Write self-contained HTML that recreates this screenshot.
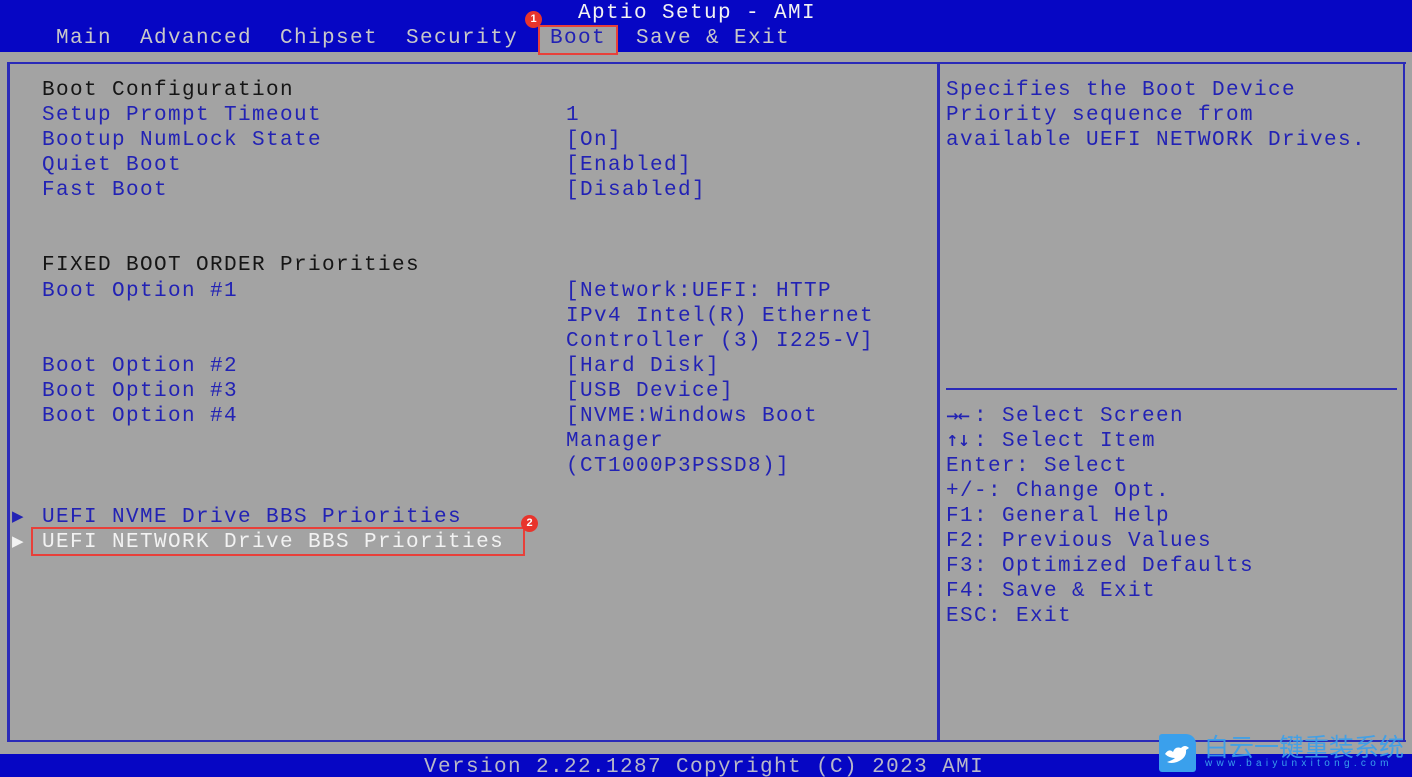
<!DOCTYPE html>
<html style="width:1412px;height:777px;overflow:hidden"><head><meta charset="utf-8"><style>
*{margin:0;padding:0;box-sizing:border-box}
body{width:1412px;height:777px;background:#a3a3a3;position:relative;overflow:hidden;font-family:"Liberation Mono",monospace;font-size:21px;letter-spacing:1.4px}
.a{position:absolute;white-space:pre;line-height:25px}
.b{color:#2222b4}.k{color:#151515}.w{color:#f2f2f2}.g{color:#c8c8c8}
.bar{position:absolute;background:#0606c4}
.ln{position:absolute;background:#2a2ab8}
.badge{position:absolute;width:17px;height:17px;border-radius:50%;background:#e8342c;color:#fff;font:bold 11px "Liberation Sans",sans-serif;text-align:center;line-height:17px;letter-spacing:0}
.red{position:absolute;border:2px solid #e8403a}
.ar{display:inline-block;width:28px;font-size:15px;letter-spacing:-1px;font-weight:bold;font-family:"DejaVu Sans",sans-serif}
</style></head><body>
<div class="bar" style="left:0;top:0;width:1412px;height:52px"></div>
<div class="a w" style="left:578px;top:1px">Aptio Setup - AMI</div>
<div class="a g" style="left:56px;top:26px">Main  Advanced  Chipset  Security</div>
<div style="position:absolute;left:540px;top:27px;width:77px;height:25px;background:#a3a3a3"></div>
<div class="a" style="left:550px;top:26px;color:#2222b4">Boot</div>
<div class="a g" style="left:636px;top:26px">Save &amp; Exit</div>
<div class="red" style="left:538px;top:25px;width:80px;height:30px"></div>
<div class="badge" style="left:525px;top:11px">1</div>

<div class="ln" style="left:7px;top:62px;width:1399px;height:2px"></div>
<div class="ln" style="left:7px;top:62px;width:3px;height:680px"></div>
<div class="ln" style="left:937px;top:62px;width:3px;height:680px"></div>
<div class="ln" style="left:1403px;top:62px;width:2px;height:680px"></div>
<div class="ln" style="left:7px;top:740px;width:1399px;height:2px"></div>
<div class="ln" style="left:946px;top:388px;width:451px;height:2px"></div>

<div class="a k" style="left:42px;top:78px">Boot Configuration</div>
<div class="a b" style="left:42px;top:103px">Setup Prompt Timeout
Bootup NumLock State
Quiet Boot
Fast Boot</div>
<div class="a b" style="left:566px;top:103px">1
[On]
[Enabled]
[Disabled]</div>
<div class="a k" style="left:42px;top:253px">FIXED BOOT ORDER Priorities</div>
<div class="a b" style="left:42px;top:279px">Boot Option #1


Boot Option #2
Boot Option #3
Boot Option #4</div>
<div class="a b" style="left:566px;top:279px">[Network:UEFI: HTTP
IPv4 Intel(R) Ethernet
Controller (3) I225-V]
[Hard Disk]
[USB Device]
[NVME:Windows Boot
Manager
(CT1000P3PSSD8)]</div>
<div class="a b" style="left:12px;top:505px;font-size:15px">▶</div>
<div class="a b" style="left:42px;top:505px">UEFI NVME Drive BBS Priorities</div>
<div class="a w" style="left:12px;top:530px;font-size:15px">▶</div>
<div class="a w" style="left:42px;top:530px">UEFI NETWORK Drive BBS Priorities</div>
<div class="red" style="left:31px;top:527px;width:494px;height:29px"></div>
<div class="badge" style="left:521px;top:515px">2</div>

<div class="a b" style="left:946px;top:78px">Specifies the Boot Device
Priority sequence from
available UEFI NETWORK Drives.</div>
<div class="a b" style="left:946px;top:404px"><span class="ar">→←</span>: Select Screen
<span class="ar">↑↓</span>: Select Item
Enter: Select
+/-: Change Opt.
F1: General Help
F2: Previous Values
F3: Optimized Defaults
F4: Save &amp; Exit
ESC: Exit</div>

<div class="bar" style="left:0;top:754px;width:1412px;height:23px"></div>
<div class="a" style="left:424px;top:756px;color:#b8b8c8;line-height:24px">Version 2.22.1287 Copyright (C) 2023 AMI</div>
<div style="position:absolute;left:1159px;top:734px;width:37px;height:38px;background:#3aa0ec;border-radius:3px 10px 3px 3px"></div>
<svg style="position:absolute;left:1163px;top:742px" width="30" height="24" viewBox="0 0 30 24"><path d="M2 12 Q6 6 10 10 Q12 4 18 6 Q22 2 26 6 L23 8 Q24 16 14 20 Q8 22 4 20 Q10 18 12 16 Q6 16 2 12Z" fill="#fff"/></svg>
<div style="position:absolute;left:1204px;top:732px;color:#3aa0ec;font:25px 'Noto Sans CJK SC',sans-serif;letter-spacing:0;line-height:28px;white-space:nowrap;opacity:.9">白云一键重装系统</div>
<div style="position:absolute;left:1205px;top:758px;color:#3aa0ec;font:10px 'Liberation Sans',sans-serif;letter-spacing:4.3px;white-space:nowrap">www.baiyunxitong.com</div>
</body></html>
